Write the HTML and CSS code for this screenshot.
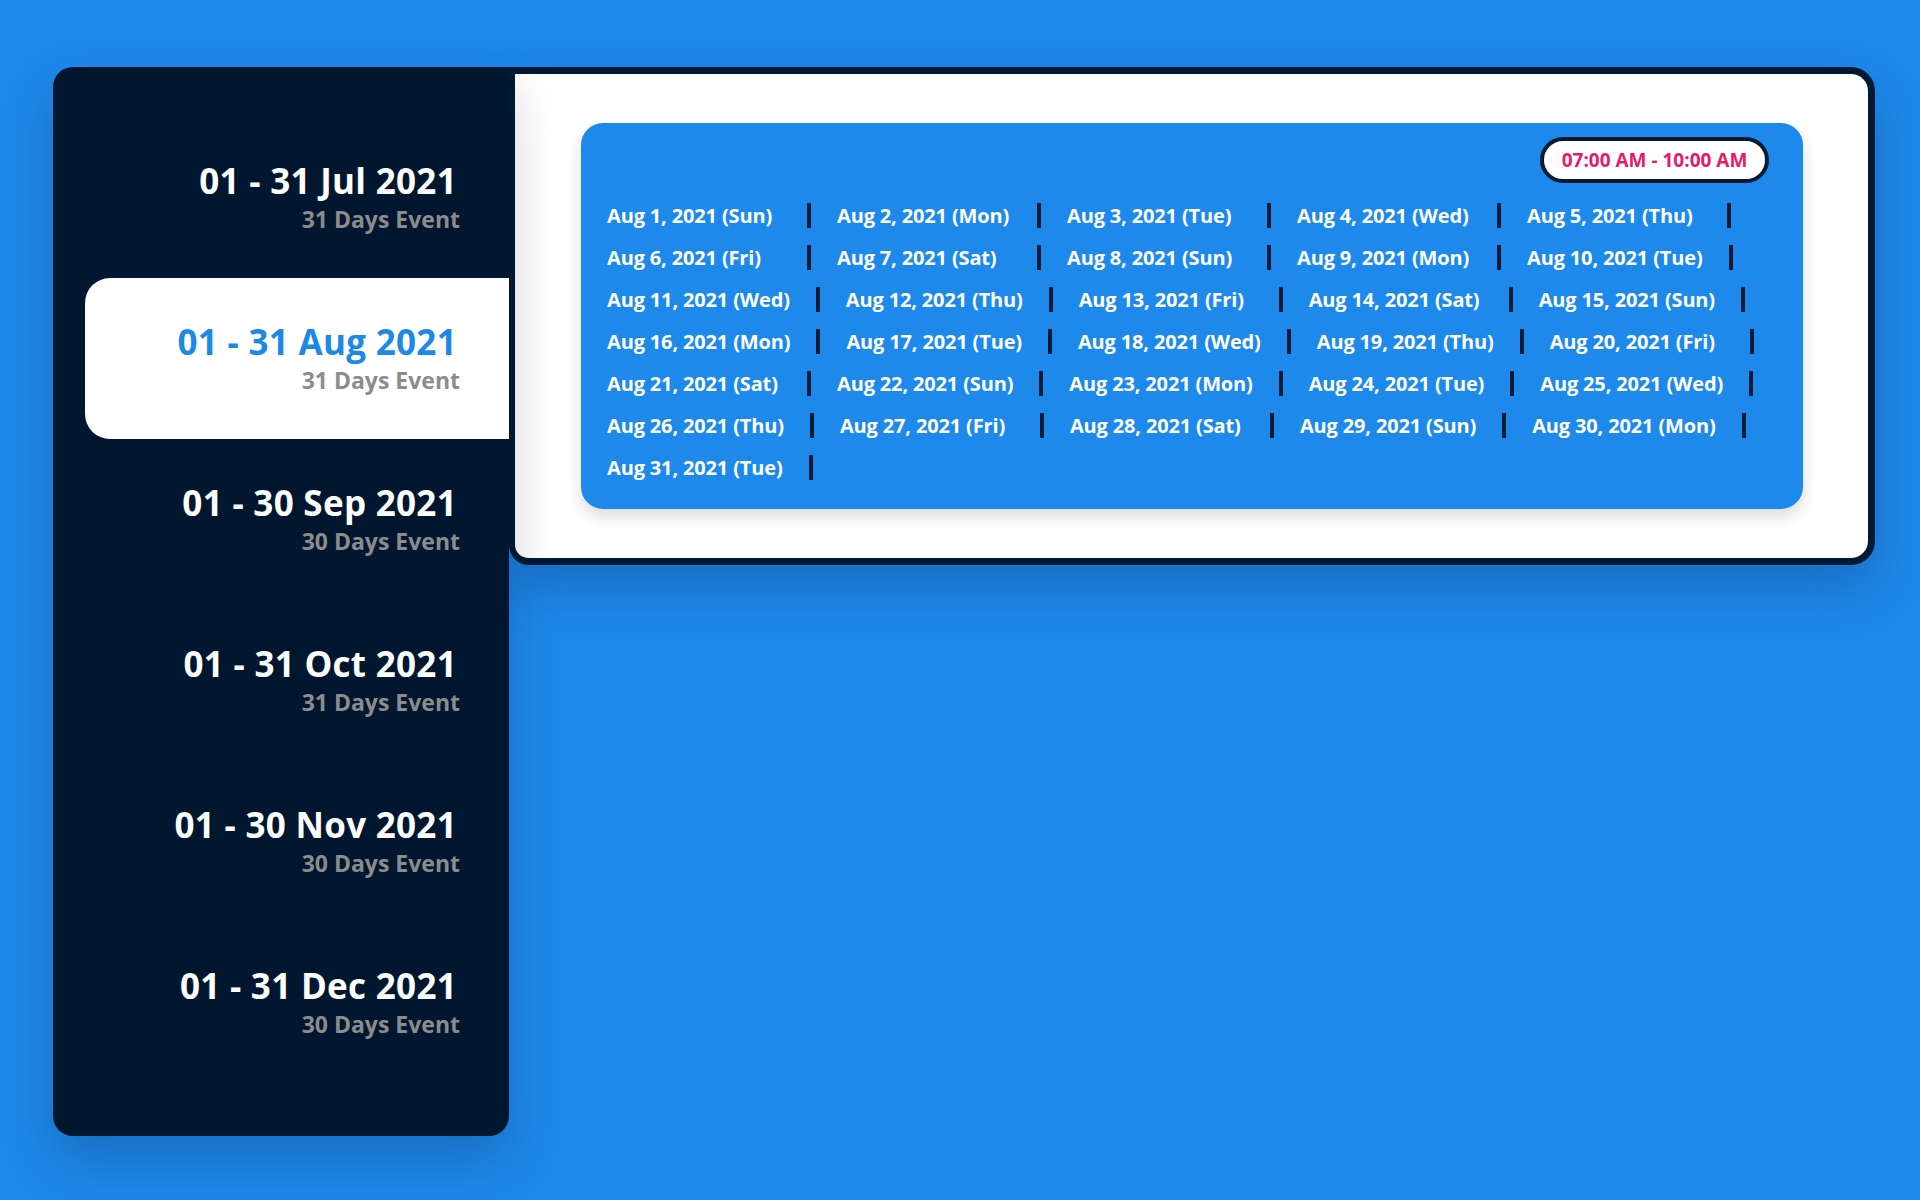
FILE: index.html
```html
<!DOCTYPE html>
<html lang="en">
<head>
<meta charset="utf-8">
<title>Event Schedule</title>
<link rel="stylesheet" href="styles.css">
</head>
<body>
<div class="stage">
  <aside class="sidebar">
    <div class="month">
      <div class="month-title">01 - 31 Jul 2021</div>
      <div class="month-sub">31 Days Event</div>
    </div>
    <div class="month active">
      <div class="month-title">01 - 31 Aug 2021</div>
      <div class="month-sub">31 Days Event</div>
    </div>
    <div class="month">
      <div class="month-title">01 - 30 Sep 2021</div>
      <div class="month-sub">30 Days Event</div>
    </div>
    <div class="month">
      <div class="month-title">01 - 31 Oct 2021</div>
      <div class="month-sub">31 Days Event</div>
    </div>
    <div class="month">
      <div class="month-title">01 - 30 Nov 2021</div>
      <div class="month-sub">30 Days Event</div>
    </div>
    <div class="month">
      <div class="month-title">01 - 31 Dec 2021</div>
      <div class="month-sub">30 Days Event</div>
    </div>
  </aside>
  <main class="panel">
    <section class="card">
      <div class="time-pill">07:00 AM - 10:00 AM</div>
      <ul class="dates">
        <li>Aug 1, 2021 (Sun)</li>
        <li>Aug 2, 2021 (Mon)</li>
        <li>Aug 3, 2021 (Tue)</li>
        <li>Aug 4, 2021 (Wed)</li>
        <li>Aug 5, 2021 (Thu)</li>
        <li>Aug 6, 2021 (Fri)</li>
        <li>Aug 7, 2021 (Sat)</li>
        <li>Aug 8, 2021 (Sun)</li>
        <li>Aug 9, 2021 (Mon)</li>
        <li>Aug 10, 2021 (Tue)</li>
        <li>Aug 11, 2021 (Wed)</li>
        <li>Aug 12, 2021 (Thu)</li>
        <li>Aug 13, 2021 (Fri)</li>
        <li>Aug 14, 2021 (Sat)</li>
        <li>Aug 15, 2021 (Sun)</li>
        <li>Aug 16, 2021 (Mon)</li>
        <li>Aug 17, 2021 (Tue)</li>
        <li>Aug 18, 2021 (Wed)</li>
        <li>Aug 19, 2021 (Thu)</li>
        <li>Aug 20, 2021 (Fri)</li>
        <li>Aug 21, 2021 (Sat)</li>
        <li>Aug 22, 2021 (Sun)</li>
        <li>Aug 23, 2021 (Mon)</li>
        <li>Aug 24, 2021 (Tue)</li>
        <li>Aug 25, 2021 (Wed)</li>
        <li>Aug 26, 2021 (Thu)</li>
        <li>Aug 27, 2021 (Fri)</li>
        <li>Aug 28, 2021 (Sat)</li>
        <li>Aug 29, 2021 (Sun)</li>
        <li>Aug 30, 2021 (Mon)</li>
        <li>Aug 31, 2021 (Tue)</li>
      </ul>
    </section>
  </main>
</div>
</body>
</html>
```

FILE: styles.css
```css
* { box-sizing: border-box; }

html, body {
  margin: 0;
  padding: 0;
}

body {
  background: #1e89ea;
  font-family: "Open Sans", "Noto Sans", sans-serif;
  width: 1920px;
  height: 1200px;
  overflow: hidden;
}

.stage {
  display: flex;
  align-items: flex-start;
  padding: 67px 0 0 53px;
}

.sidebar {
  width: 456px;
  height: 1069px;
  background: #011730;
  border-radius: 20px 0 20px 20px;
  padding: 50px 0 0 32px;
  box-shadow: 0 24px 50px rgba(0, 20, 60, 0.22);
  position: relative;
  z-index: 2;
}

.month {
  height: 161px;
  padding: 43px 52px 0 0;
  text-align: right;
  border-radius: 25px 0 0 25px;
}

.month.active {
  background: #ffffff;
}

.month-title {
  color: #ffffff;
  font-size: 35px;
  font-weight: 700;
  line-height: 42px;
  letter-spacing: 0.3px;
}

.month.active .month-title {
  color: #1e88e5;
}

.month-sub {
  color: #8c8c8c;
  font-size: 23px;
  font-weight: 700;
  line-height: 26px;
  margin-top: 4px;
  margin-right: -3px;
}

.panel {
  width: 1366px;
  background: #ffffff;
  border: 7px solid #021a33;
  border-left-width: 6px;
  border-radius: 0 24px 24px 20px;
  padding: 49px 65px 49px 66px;
  box-shadow: 0 24px 50px rgba(0, 20, 60, 0.22);
  position: relative;
  z-index: 1;
}

.card {
  background: #1d89ea;
  border-radius: 22px;
  padding: 14px 0 29px 26px;
  display: flex;
  flex-direction: column;
  box-shadow: 0 8px 16px rgba(0, 0, 0, 0.14);
}

.time-pill {
  align-self: flex-end;
  margin-right: 34px;
  height: 46px;
  width: 229px;
  border: 4px solid #0a1a2e;
  border-radius: 23px;
  background: #ffffff;
  color: #e8196b;
  font-size: 19px;
  font-weight: 700;
  line-height: 38px;
  text-align: center;
}

.dates {
  list-style: none;
  margin: 20px 0 0 0;
  padding: 0;
  display: flex;
  flex-wrap: wrap;
  row-gap: 17px;
}

.dates li {
  box-sizing: content-box;
  min-width: 174px;
  height: 25px;
  line-height: 25px;
  padding-right: 26px;
  margin-right: 26px;
  border-right: 4px solid #021a33;
  color: #ffffff;
  font-size: 20px;
  font-weight: 700;
  letter-spacing: -0.15px;
  white-space: nowrap;
}
```
